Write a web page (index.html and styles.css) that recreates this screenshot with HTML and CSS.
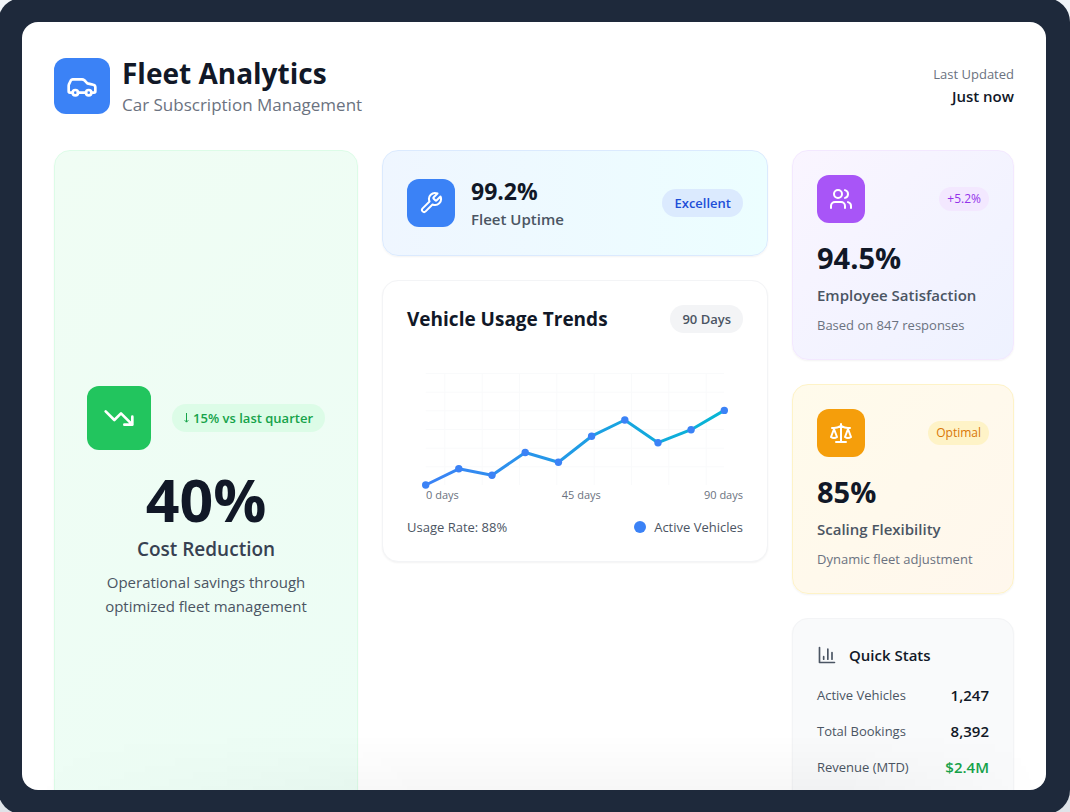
FILE: index.html
```html
<!DOCTYPE html>
<html lang="en">
<head>
<meta charset="utf-8">
<meta name="viewport" content="width=device-width, initial-scale=1">
<title>Fleet Analytics</title>
<link rel="stylesheet" href="styles.css">
</head>
<body>
<div class="tablet">
  <main class="screen">
    <header class="header">
      <div class="brand">
        <div class="icon icon-brand">
          <svg class="glyph glyph-large" viewBox="0 0 24 24" aria-hidden="true"><path d="M19 17h2c.6 0 1-.4 1-1v-3c0-.9-.7-1.7-1.5-1.900C18.700 10.600 16 10 16 10s-1.300-1.400-2.200-2.300c-.5-.4-1.100-.7-1.800-.7H5c-.6 0-1.100.4-1.400.9l-1.400 2.900A3.700 3.700 0 0 0 2 12v4c0 .6.4 1 1 1h2M9 17h6"/><circle cx="7" cy="17" r="2"/><circle cx="17" cy="17" r="2"/></svg>
        </div>
        <div>
          <h1 class="title">Fleet Analytics</h1>
          <p class="subtitle">Car Subscription Management</p>
        </div>
      </div>
      <div class="updated">
        <p class="small muted">Last Updated</p>
        <p class="updated-value">Just now</p>
      </div>
    </header>

    <div class="grid">
      <section class="card cost">
        <div class="row cost-top">
          <div class="icon icon-cost">
            <svg class="glyph glyph-large" viewBox="0 0 24 24" aria-hidden="true"><path d="M22 17 13.500 8.500l-5 5L2 7M16 17h6v-6"/></svg>
          </div>
          <span class="badge badge-green"><svg class="arrow" viewBox="0 0 5 12" aria-hidden="true"><path d="M2.500 1v9M.7 8.200l1.800 2 1.800-2"/></svg>15% vs last quarter</span>
        </div>
        <p class="cost-value">40%</p>
        <h2 class="cost-label">Cost Reduction</h2>
        <p class="cost-note">Operational savings through optimized fleet management</p>
      </section>

      <div class="column">
        <section class="card uptime row">
          <div class="uptime-main">
            <div class="icon icon-blue">
              <svg class="glyph" viewBox="0 0 24 24" aria-hidden="true"><path d="M14.700 6.300a1 1 0 0 0 0 1.400l1.600 1.600a1 1 0 0 0 1.400 0l3.770-3.770a6 6 0 0 1-7.940 7.940l-6.910 6.910a2.120 2.120 0 0 1-3-3l6.910-6.910a6 6 0 0 1 7.940-7.940l-3.760 3.760z"/></svg>
            </div>
            <div>
              <p class="uptime-value">99.2%</p>
              <h2 class="label">Fleet Uptime</h2>
            </div>
          </div>
          <span class="badge badge-blue">Excellent</span>
        </section>

        <section class="card trends">
          <div class="row trends-head">
            <h2 class="trends-title">Vehicle Usage Trends</h2>
            <span class="badge badge-gray">90 Days</span>
          </div>
          <svg class="chart" viewBox="0 0 336 130" role="img" aria-label="Active vehicles over 90 days">
            <defs><linearGradient id="trend" x1="0" y1="0" x2="1" y2="0"><stop offset="0" stop-color="#3b82f6"/><stop offset="1" stop-color="#06b6d4"/></linearGradient></defs>
            <path class="chart-grid" d="M18.700 16.500H317M18.700 35.200H317M18.700 53.800H317M18.700 72.500H317M18.700 91.200H317M18.700 109.800H317M37.800 16V128M75.200 16V128M112.500 16V128M149.800 16V128M187.200 16V128M224.500 16V128M261.800 16V128M299.200 16V128"/>
            <polyline class="chart-line" points="18.700,128 51.800,111.800 85,118.200 118.200,95.500 151.400,105.300 184.600,79.200 217.800,63 251,85.700 284.100,72.700 317.300,53.400"/>
            <g class="chart-dots"><circle cx="18.700" cy="128" r="3.700"/><circle cx="51.800" cy="111.800" r="3.700"/><circle cx="85" cy="118.200" r="3.700"/><circle cx="118.200" cy="95.500" r="3.700"/><circle cx="151.400" cy="105.300" r="3.700"/><circle cx="184.600" cy="79.200" r="3.700"/><circle cx="217.800" cy="63" r="3.700"/><circle cx="251" cy="85.700" r="3.700"/><circle cx="284.100" cy="72.700" r="3.700"/><circle cx="317.300" cy="53.400" r="3.700"/></g>
          </svg>
          <div class="row axis"><span>0 days</span><span>45 days</span><span>90 days</span></div>
          <div class="row small legend">
            <span>Usage Rate: 88%</span>
            <span class="legend-key"><i class="dot"></i>Active Vehicles</span>
          </div>
        </section>
      </div>

      <div class="column">
        <section class="card metric metric-purple">
          <div class="row">
            <div class="icon icon-purple">
              <svg class="glyph" viewBox="0 0 24 24" aria-hidden="true"><path d="M16 21v-2a4 4 0 0 0-4-4H6a4 4 0 0 0-4 4v2M22 21v-2a4 4 0 0 0-3-3.870M16 3.130a4 4 0 0 1 0 7.750"/><circle cx="9" cy="7" r="4"/></svg>
            </div>
            <span class="badge badge-small badge-purple">+5.2%</span>
          </div>
          <p class="metric-value">94.5%</p>
          <h2 class="label">Employee Satisfaction</h2>
          <p class="small muted metric-note">Based on 847 responses</p>
        </section>

        <section class="card metric metric-amber">
          <div class="row">
            <div class="icon icon-amber">
              <svg class="glyph" viewBox="0 0 24 24" aria-hidden="true"><path d="m16 16 3-8 3 8c-.870.650-1.920 1-3 1s-2.130-.350-3-1ZM2 16l3-8 3 8c-.870.650-1.920 1-3 1s-2.130-.350-3-1ZM7 21h10M12 3v18M3 7h2c2 0 5-1 7-2 2 1 5 2 7 2h2"/></svg>
            </div>
            <span class="badge badge-small badge-amber">Optimal</span>
          </div>
          <p class="metric-value">85%</p>
          <h2 class="label">Scaling Flexibility</h2>
          <p class="small muted metric-note">Dynamic fleet adjustment</p>
        </section>

        <section class="card stats">
          <div class="stats-head">
            <svg class="stats-icon" viewBox="0 0 24 24" aria-hidden="true"><path d="M3 3v18h18M18 17V9M13 17V5M8 17v-3"/></svg>
            <h2 class="stats-title">Quick Stats</h2>
          </div>
          <dl class="stats-list">
            <div class="row"><dt>Active Vehicles</dt><dd>1,247</dd></div>
            <div class="row"><dt>Total Bookings</dt><dd>8,392</dd></div>
            <div class="row"><dt>Revenue (MTD)</dt><dd class="positive">$2.4M</dd></div>
          </dl>
        </section>
      </div>
    </div>
  </main>
</div>
</body>
</html>
```
FILE: styles.css
```css
* { box-sizing: border-box; }
h1, h2, p, dl, dd { margin: 0; }

body {
  margin: 0;
  height: 100vh;
  overflow: hidden;
  background: linear-gradient(#f1f5f9, #dfe3e8);
  color: #111827;
  font-family: "Segoe UI", "Open Sans", "Noto Sans", sans-serif;
  font-size: 15px;
  line-height: 24px;
}

.tablet {
  height: calc(100vh + 4px);
  margin: -2px 0 -2px -2px;
  padding: 24px;
  border-radius: 24px;
  background: #1e293b;
}

.screen {
  position: relative;
  height: 100%;
  padding: 32px;
  overflow: hidden;
  border-radius: 16px;
  background: #fff;
}
.screen::after {
  content: "";
  position: absolute;
  inset: auto 0 0 0;
  height: 56px;
  background: linear-gradient(transparent, rgba(0, 0, 0, 0.03));
  mask-image: linear-gradient(to right, transparent, #000 40%, #000 80%, transparent);
  pointer-events: none;
}

.row, .header { display: flex; align-items: center; justify-content: space-between; }
.header { margin-bottom: 32px; }
.brand { display: flex; align-items: center; gap: 12px; }
.title { font-size: 28px; font-weight: 700; line-height: 38px; }
.subtitle { color: #6b7280; font-size: 17px; line-height: 26px; }
.updated { text-align: right; }
.updated-value { font-weight: 600; }
.small { font-size: 13px; line-height: 20px; }
.muted { color: #6b7280; }

.icon {
  display: flex;
  flex: none;
  align-items: center;
  justify-content: center;
  width: 48px;
  height: 48px;
  border-radius: 12px;
}
.icon-brand { width: 56px; height: 56px; background: #3b82f6; }
.icon-cost { width: 64px; height: 64px; background: #22c55e; }
.icon-blue { background: #3b82f6; }
.icon-purple { background: #a855f7; }
.icon-amber { background: #f59e0b; }
.glyph {
  width: 24px;
  height: 24px;
  fill: none;
  stroke: #fff;
  stroke-width: 2;
  stroke-linecap: round;
  stroke-linejoin: round;
}
.glyph-large { width: 32px; height: 32px; }

.grid {
  display: grid;
  grid-template-columns: repeat(12, minmax(0, 1fr));
  gap: 24px;
  min-height: 704px;
}
.column { display: flex; flex-direction: column; gap: 24px; grid-column: span 3; }
.cost { grid-column: span 4; }
.cost + .column { grid-column: span 5; }

.card {
  padding: 24px;
  border: 1px solid #f3f4f6;
  border-radius: 16px;
  background: #fff;
  box-shadow: 0 1px 2px rgba(0, 0, 0, 0.05);
}

.badge {
  display: inline-flex;
  align-items: center;
  padding: 4px 12px;
  border-radius: 999px;
  font-size: 13px;
  font-weight: 600;
  line-height: 20px;
  white-space: nowrap;
}
.badge-small { padding: 4px 8px; font-size: 12px; font-weight: 500; line-height: 16px; }
.badge-green { background: #dcfce7; color: #16a34a; }
.badge-blue { background: #dbeafe; color: #1d4ed8; }
.badge-gray { background: #f3f4f6; color: #4b5563; }
.badge-purple { background: #f3e8ff; color: #9333ea; }
.badge-amber { background: #fef3c7; color: #d97706; }
.arrow { width: 5px; height: 12px; margin-right: 4px; fill: none; stroke: currentColor; }

.cost {
  display: flex;
  flex-direction: column;
  justify-content: center;
  padding: 32px;
  border-color: #dcfce7;
  background: linear-gradient(135deg, #f0fdf4, #ecfdf5);
  text-align: center;
}
.cost-top { margin-bottom: 20px; }
.cost-value { margin-bottom: 7px; font-size: 59px; font-weight: 700; line-height: 58px; }
.cost-label { margin-bottom: 7px; color: #374151; font-size: 19px; font-weight: 600; line-height: 28px; }
.cost-note { color: #4b5563; }

.uptime { border-color: #dbeafe; background: linear-gradient(90deg, #eff6ff, #ecfeff); }
.uptime-main { display: flex; align-items: center; gap: 16px; }
.uptime-value { font-size: 23px; font-weight: 700; line-height: 32px; }
.label { color: #4b5563; font-size: 15px; font-weight: 600; line-height: 24px; }

.trends-head { margin-bottom: 24px; }
.trends-title { font-size: 19px; font-weight: 700; line-height: 28px; }
.chart { display: block; width: 100%; overflow: visible; }
.chart-grid { fill: none; stroke: #f9fafb; stroke-width: 1; }
.chart-line { fill: none; stroke: url(#trend); stroke-width: 3; stroke-linecap: round; stroke-linejoin: round; }
.chart-dots { fill: #3b82f6; }
.axis { padding-left: 19px; color: #6b7280; font-size: 11px; line-height: 16px; }
.legend { margin-top: 14px; color: #4b5563; }
.legend-key { display: flex; align-items: center; gap: 8px; }
.dot { width: 12px; height: 12px; border-radius: 50%; background: #3b82f6; }

.metric-purple { border-color: #f3e8ff; background: linear-gradient(135deg, #faf5ff, #eef2ff); }
.metric-amber { border-color: #fef3c7; background: linear-gradient(135deg, #fffbeb, #fff7ed); }
.metric-value { margin: 17px 0 7px; font-size: 29px; font-weight: 700; line-height: 36px; }
.metric-note { margin-top: 8px; }

.stats { flex: 1; background: #f9fafb; }
.stats-head { display: flex; align-items: center; gap: 12px; margin-bottom: 16px; }
.stats-icon { width: 20px; height: 20px; fill: none; stroke: #4b5563; stroke-width: 2; stroke-linecap: round; stroke-linejoin: round; }
.stats-title { font-size: 15px; font-weight: 600; line-height: 24px; }
.stats-list { display: grid; gap: 12px; }
.stats-list dt { color: #4b5563; font-size: 13px; }
.stats-list dd { font-weight: 600; }
.stats-list .positive { color: #16a34a; }
```
